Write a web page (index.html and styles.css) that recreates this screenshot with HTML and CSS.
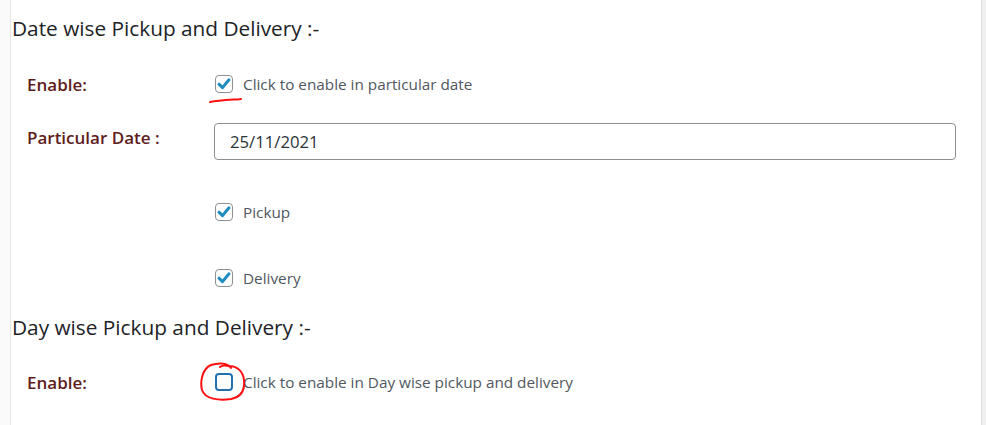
FILE: index.html
```html
<!DOCTYPE html>
<html lang="en">
<head>
<meta charset="utf-8">
<title>Pickup and Delivery settings</title>
<link rel="stylesheet" href="styles.css">
</head>
<body>
<div class="page">
  <div class="strip-left"></div>
  <main class="panel">
    <h2 class="section-title first">Date wise Pickup and Delivery :-</h2>
    <div class="row row-enable">
      <div class="label">Enable:</div>
      <div class="field">
        <label class="check">
          <span class="box checked">
            <svg viewBox="0 0 18 18" width="18" height="18"><path d="M4 9.2 L7.5 12.6 L14 4.8" fill="none" stroke="#1e8cbe" stroke-width="3" stroke-linecap="round" stroke-linejoin="round"/></svg>
          </span>
          <span class="check-text">Click to enable in particular date</span>
        </label>
      </div>
    </div>
    <div class="row row-date">
      <div class="label label-top">Particular Date :</div>
      <div class="field">
        <div class="input">25/11/2021</div>
      </div>
    </div>
    <div class="row row-pickup">
      <div class="label"></div>
      <div class="field">
        <label class="check">
          <span class="box checked">
            <svg viewBox="0 0 18 18" width="18" height="18"><path d="M4 9.2 L7.5 12.6 L14 4.8" fill="none" stroke="#1e8cbe" stroke-width="3" stroke-linecap="round" stroke-linejoin="round"/></svg>
          </span>
          <span class="check-text">Pickup</span>
        </label>
      </div>
    </div>
    <div class="row row-delivery">
      <div class="label"></div>
      <div class="field">
        <label class="check">
          <span class="box checked">
            <svg viewBox="0 0 18 18" width="18" height="18"><path d="M4 9.2 L7.5 12.6 L14 4.8" fill="none" stroke="#1e8cbe" stroke-width="3" stroke-linecap="round" stroke-linejoin="round"/></svg>
          </span>
          <span class="check-text">Delivery</span>
        </label>
      </div>
    </div>
    <h2 class="section-title second">Day wise Pickup and Delivery :-</h2>
    <div class="row row-enable2">
      <div class="label">Enable:</div>
      <div class="field">
        <label class="check">
          <span class="box focused"></span>
          <span class="check-text">Click to enable in Day wise pickup and delivery</span>
        </label>
      </div>
    </div>
    <svg class="mark mark-underline" width="40" height="10" viewBox="0 0 40 10"><path d="M2 7 C 10 5.5, 20 5, 31 4.2 L 33 4" fill="none" stroke="#ff1010" stroke-width="2" stroke-linecap="round"/></svg>
    <svg class="mark mark-circle" width="54" height="44" viewBox="0 0 54 44"><path d="M34 8 C 30 2, 20 3, 14 5 C 5 9, 3 22, 5 30 C 8 39, 22 41, 34 39 C 44 37, 48 30, 47 20 C 46 11, 40 6, 32 6 C 28 5, 25 5, 23 7" fill="none" stroke="#ff1010" stroke-width="2" stroke-linecap="round"/></svg>
  </main>
  <div class="strip-right"></div>
</div>
</body>
</html>
```
FILE: styles.css
```css
html, body {
  margin: 0;
  padding: 0;
  height: 100%;
}
body {
  background: #f0f0f0;
  font-family: "Open Sans", "Noto Sans", "Liberation Sans", sans-serif;
  overflow: hidden;
}
.page {
  display: flex;
  height: 425px;
}
.strip-left {
  width: 10px;
  background: #fafafa;
  flex: none;
}
.strip-right {
  width: 4px;
  background: #f0f0f0;
  flex: none;
}
.panel {
  position: relative;
  flex: 1;
  background: #ffffff;
  border-left: 1px solid #e6e6e6;
  border-right: 1px solid #dcdcdc;
  padding: 0 0 0 1px;
}
.section-title {
  margin: 0;
  font-size: 20.8px;
  font-weight: 400;
  line-height: 28px;
  color: #1d2327;
}
.section-title.first { margin-top: 14px; }
.section-title.second { margin-top: 17px; }
.row {
  display: flex;
  align-items: center;
  padding-left: 15px;
}
.row-enable { margin-top: 24px; height: 36px; }
.row-date { margin-top: 21px; align-items: flex-start; }
.row-pickup { margin-top: 34px; height: 36px; }
.row-delivery { margin-top: 30px; height: 36px; }
.row-enable2 { margin-top: 23px; height: 36px; }
.label {
  width: 187px;
  flex: none;
  font-size: 17px;
  font-weight: 600;
  color: #5e1c1c;
}
.label-top {
  padding-top: 4px;
  line-height: 22px;
}
.field {
  flex: none;
}
.check {
  display: flex;
  align-items: center;
  gap: 10px;
  margin-left: 1px;
}
.box {
  width: 18px;
  height: 18px;
  box-sizing: border-box;
  border: 1px solid #8c8f94;
  border-radius: 4px;
  background: #fff;
  display: flex;
  align-items: center;
  justify-content: center;
  overflow: hidden;
}
.box svg { display: block; flex: none; }
.box.focused {
  border: 2px solid #2271b1;
}
.check-text {
  font-size: 15.3px;
  color: #50575e;
}
.input {
  width: 742px;
  height: 37px;
  box-sizing: border-box;
  border: 1px solid #8c8f94;
  border-radius: 4px;
  padding: 0 15px;
  display: flex;
  align-items: center;
  font-size: 16.7px;
  color: #2c3338;
}
.mark {
  position: absolute;
  pointer-events: none;
}
.mark-underline {
  left: 197px;
  top: 95px;
}
.mark-circle {
  left: 186px;
  top: 360px;
}
```
